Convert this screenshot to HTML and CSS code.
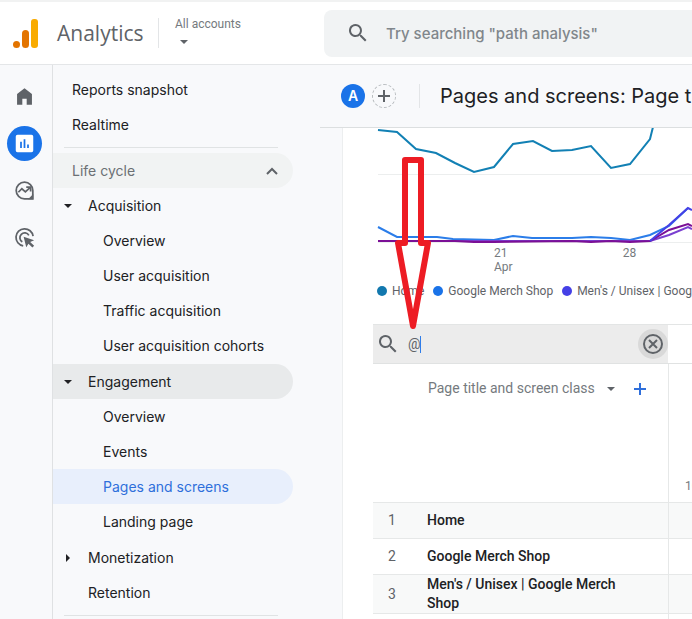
FILE: index.html
```html
<!DOCTYPE html>
<html lang="en">
<head>
  <meta charset="UTF-8">
  <meta name="viewport" content="width=device-width, initial-scale=1">
  <title>Analytics | Pages and screens</title>
  <link rel="stylesheet" href="styles.css">
</head>
<body>
  <header class="topbar">
    <svg class="logo" viewBox="0 0 26 30" aria-hidden="true">
      <circle cx="3.500" cy="26.500" r="3.500" fill="#e37400"/>
      <rect x="9" y="12" width="7" height="18" rx="3.500" fill="#e37400"/>
      <rect x="18" y="1" width="7" height="29" rx="3" fill="#f9ab00"/>
    </svg>
    <span class="brand">Analytics</span>
    <button class="accounts" type="button">
      <span>All accounts</span>
      <span class="arrow-down"></span>
    </button>
    <label class="search">
      <svg class="icon" viewBox="0 0 24 24" aria-hidden="true"><path d="M15.5 14h-.8l-.3-.3A6.5 6.5 0 1 0 13.7 14.4l.3.3v.8l5 5 1.5-1.5-5-5zm-6 0a4.5 4.5 0 1 1 0-9 4.5 4.5 0 0 1 0 9z"/></svg>
      <input type="search" aria-label="Search" placeholder="Try searching &quot;path analysis&quot;">
    </label>
  </header>

  <div class="layout">
    <nav class="rail" aria-label="Main">
      <a href="#" aria-label="Home">
        <svg class="icon" viewBox="0 0 24 24"><path d="M12 2.500 3.500 9v12.500h6v-7h5v7h6V9z"/></svg>
      </a>
      <a href="#" class="active" aria-label="Reports">
        <svg class="icon" viewBox="0 0 24 24"><path d="M4 2h16a2 2 0 0 1 2 2v16a2 2 0 0 1-2 2H4a2 2 0 0 1-2-2V4a2 2 0 0 1 2-2zm3 8v7h2v-7zm4-3v10h2V7zm4 6v4h2v-4z" fill-rule="evenodd"/></svg>
      </a>
      <a href="#" aria-label="Explore">
        <svg class="icon line" viewBox="0 0 24 24"><path d="M21.500 12A9.500 9.500 0 1 0 12 21.500h9.500z"/><path d="m5 14 4-4 4 3.500L18 9"/><path d="M14 8h5v5"/><path class="solid" d="M22 16v6h-6z"/></svg>
      </a>
      <a href="#" aria-label="Advertising">
        <svg class="icon line" viewBox="0 0 24 24"><path d="M10.500 21.500A9.800 9.800 0 1 1 21.800 10.500"/><path d="M9.500 17A5.500 5.500 0 1 1 17 9.500"/><path class="solid" d="m11 11 12 4-4.500 2 4.500 4.500-2 2-4.500-4.500L14 23z"/></svg>
      </a>
    </nav>

    <nav class="menu" aria-label="Reports">
      <a href="#">Reports snapshot</a>
      <a href="#">Realtime</a>
      <hr>
      <button class="section" type="button">
        Life cycle
        <svg viewBox="0 0 12 8" aria-hidden="true"><path d="m1 7 5-5 5 5"/></svg>
      </button>
      <div class="group">
        <a href="#" class="parent"><span class="arrow-down"></span>Acquisition</a>
        <a href="#" class="child">Overview</a>
        <a href="#" class="child">User acquisition</a>
        <a href="#" class="child">Traffic acquisition</a>
        <a href="#" class="child">User acquisition cohorts</a>
      </div>
      <div class="group">
        <a href="#" class="parent open"><span class="arrow-down"></span>Engagement</a>
        <a href="#" class="child">Overview</a>
        <a href="#" class="child">Events</a>
        <a href="#" class="child current">Pages and screens</a>
        <a href="#" class="child">Landing page</a>
      </div>
      <a href="#" class="parent"><span class="arrow-right"></span>Monetization</a>
      <a href="#" class="parent">Retention</a>
      <hr>
    </nav>

    <main class="main">
      <div class="page-head">
        <span class="avatar">A</span>
        <button class="add" type="button" aria-label="Add comparison">
          <svg viewBox="0 0 12 12"><path d="M6 0v12M0 6h12"/></svg>
        </button>
        <h1>Pages and screens: Page title and screen class</h1>
      </div>

      <section class="card">
        <div class="chart">
          <svg viewBox="0 0 319 116" preserveAspectRatio="xMinYMin slice" aria-hidden="true">
            <path class="grid" d="M5 46.500H319M5 114.500H319"/>
            <polyline class="s-home" points="5,2 24,4 43,21 63,25 82,35 101,44 121,39 140,16 160,13 179,23 199,22 218,18 238,40 257,36 277,11 280,-1"/>
            <polyline class="s-shop" points="5,99 24,109 64,109 80,111 121,112 140,108 159,110 199,110 218,109 238,110 257,112 277,107 296,98 315,80"/>
            <polyline class="s-violet" points="5,113 277,113 296,107 315,99 319,101"/>
            <polyline class="s-purple" points="5,113 82,113 101,114 121,114 199,113 218,114 238,113 257,114 277,113 296,102 315,96 319,98"/>
            <polyline class="s-mens" points="277,113 296,97 315,80 319,82"/>
          </svg>
          <div class="axis">
            <span>21<br>Apr</span>
            <span>28</span>
          </div>
          <ul class="legend">
            <li class="home">Home</li>
            <li class="shop">Google Merch Shop</li>
            <li class="mens">Men's / Unisex | Google Merch Shop</li>
          </ul>
        </div>

        <div class="filter-row">
          <div class="filter">
            <svg class="icon" viewBox="0 0 24 24" aria-hidden="true"><path d="M15.5 14h-.8l-.3-.3A6.5 6.5 0 1 0 13.7 14.4l.3.3v.8l5 5 1.5-1.5-5-5zm-6 0a4.5 4.5 0 1 1 0-9 4.5 4.5 0 0 1 0 9z"/></svg>
            <div class="field">
              <input type="text" aria-label="Search rows" value="@">
              <span class="caret"></span>
            </div>
            <button class="clear" type="button" aria-label="Clear">
              <svg viewBox="0 0 20 20"><circle cx="10" cy="10" r="9"/><path d="m6 6 8 8M14 6l-8 8"/></svg>
            </button>
          </div>
        </div>

        <table>
          <colgroup>
            <col class="col-num">
            <col class="col-name">
            <col>
          </colgroup>
          <thead>
            <tr>
              <th class="dimension" colspan="2">
                <div class="picker">
                  <select aria-label="Dimension">
                    <option>Page title and screen class</option>
                  </select>
                  <span class="arrow-down"></span>
                  <button class="plus" type="button" aria-label="Add dimension">
                    <svg viewBox="0 0 12 12"><path d="M6 0v12M0 6h12"/></svg>
                  </button>
                </div>
              </th>
              <th class="metric">100%</th>
            </tr>
          </thead>
          <tbody>
            <tr><td class="num">1</td><td class="name">Home</td><td></td></tr>
            <tr><td class="num">2</td><td class="name">Google Merch Shop</td><td></td></tr>
            <tr><td class="num">3</td><td class="name">Men's / Unisex | Google Merch Shop</td><td></td></tr>
            <tr><td class="num"></td><td class="name"></td><td></td></tr>
          </tbody>
        </table>

        <svg class="pointer" viewBox="0 0 38 176" aria-hidden="true"><path d="M11 6h16v83h7L19 172 4 89h7z"/></svg>
      </section>
    </main>
  </div>
</body>
</html>
```
FILE: styles.css
```css
* {
  box-sizing: border-box;
}

body {
  margin: 0;
  height: 100vh;
  display: flex;
  flex-direction: column;
  overflow: hidden;
  font-family: Inter, "Liberation Sans", sans-serif;
  font-size: 14px;
  color: #202124;
  background: #f8f9fb;
}

button,
input,
select {
  font: inherit;
  color: inherit;
  border: none;
  background: none;
  padding: 0;
  margin: 0;
  outline: none;
}

a {
  color: inherit;
  text-decoration: none;
}

.icon {
  width: 24px;
  height: 24px;
  fill: #5f6368;
  flex: none;
}

.arrow-down {
  border: 4px solid transparent;
  border-top-color: currentColor;
  border-bottom: none;
}

.arrow-right {
  border: 4px solid transparent;
  border-left-color: currentColor;
  border-right: none;
}

/* top bar */
.topbar {
  flex: none;
  height: 65px;
  display: flex;
  align-items: center;
  padding-left: 13px;
  background: #fff;
  border-top: 2px solid #f1f2f2;
  border-bottom: 1px solid #e4e6e8;
}

.logo {
  width: 26px;
  height: 30px;
}

.brand {
  margin-left: 18px;
  width: 102px;
  font-family: "Open Sans", sans-serif;
  font-size: 21px;
  line-height: 30px;
  color: #5f6368;
  border-right: 1px solid #e3e5e7;
}

.accounts {
  width: 165px;
  height: 30px;
  padding-left: 16px;
  display: flex;
  flex-direction: column;
  align-items: flex-start;
  justify-content: space-between;
  font-family: Roboto, sans-serif;
  font-size: 12px;
  line-height: 12px;
  color: #757a7e;
  text-align: left;
}

.accounts .arrow-down {
  margin: 0 5px 4px;
  color: #5f6368;
}

.search {
  flex: 1;
  min-width: 0;
  height: 47px;
  display: flex;
  align-items: center;
  gap: 16px;
  padding-left: 22px;
  background: #f1f3f4;
  border-radius: 8px 0 0 8px;
}

.search input {
  flex: 1;
  min-width: 0;
  font-size: 15px;
  font-weight: 500;
}

.search input::placeholder {
  color: #80868b;
  opacity: 1;
}

/* layout */
.layout {
  flex: 1;
  min-height: 0;
  display: flex;
}

.rail {
  flex: none;
  width: 53px;
  padding: 14px 0 0 7px;
  display: flex;
  flex-direction: column;
  gap: 12px;
  border-right: 1px solid #dfe1e3;
}

.rail a {
  width: 35px;
  height: 35px;
  display: flex;
  align-items: center;
  justify-content: center;
  border-radius: 50%;
}

.rail .icon {
  width: 21px;
  height: 21px;
}

.rail .active {
  background: #1a73e8;
}

.rail .active .icon {
  fill: #fff;
}

.rail .line {
  fill: none;
  stroke: #5f6368;
  stroke-width: 2;
}

.rail .solid {
  fill: #5f6368;
  stroke: none;
}

/* report menu */
.menu {
  flex: none;
  width: 267px;
  padding-top: 7px;
}

.menu a,
.section {
  width: 240px;
  height: 35px;
  display: flex;
  align-items: center;
  padding-left: 19px;
  border-radius: 0 18px 18px 0;
}

.menu hr {
  width: 214px;
  margin: 5px 0 5px 11px;
  border: none;
  border-top: 1px solid #e0e3e4;
}

.menu .section {
  justify-content: space-between;
  padding-right: 15px;
  color: #6b7074;
  background: #f1f3f3;
}

.section svg {
  width: 12px;
  height: 8px;
  fill: none;
  stroke: #5f6368;
  stroke-width: 2;
}

.group {
  margin-bottom: 1px;
}

.menu .parent {
  padding-left: 35px;
}

.parent .arrow-down {
  margin: 0 16px 0 -24px;
}

.parent .arrow-right {
  margin: 0 18px 0 -22px;
}

.menu .child {
  padding-left: 50px;
}

.menu .open {
  background: #e8eaeb;
}

.menu .current {
  color: #2f6fdb;
  background: #e8effc;
}

/* page */
.main {
  flex: 1;
  min-width: 0;
  display: flex;
  flex-direction: column;
}

.page-head {
  flex: none;
  height: 63px;
  display: flex;
  align-items: center;
  padding-left: 21px;
  border-bottom: 1px solid #dcdfe0;
  overflow: hidden;
}

.avatar {
  flex: none;
  width: 24px;
  border-radius: 50%;
  background: #1a73e8;
  color: #fff;
  font-weight: 600;
  line-height: 24px;
  text-align: center;
}

.add {
  flex: none;
  width: 24px;
  height: 24px;
  margin: 0 23px 0 7px;
  display: flex;
  align-items: center;
  justify-content: center;
  border: 1px dashed #b9bdc0;
  border-radius: 50%;
}

.add svg,
.plus svg {
  width: 12px;
  height: 12px;
  stroke: #5f6368;
  stroke-width: 2;
}

.page-head h1 {
  margin: 0;
  padding-left: 20px;
  border-left: 1px solid #e3e5e7;
  font-size: 20px;
  font-weight: 400;
  line-height: 24px;
  white-space: nowrap;
}

.card {
  flex: 1;
  min-height: 0;
  position: relative;
  margin-left: 22px;
  padding-left: 30px;
  background: #fff;
  border-left: 1px solid #eceeef;
  overflow: hidden;
  font-family: Roboto, sans-serif;
}

.chart {
  height: 196px;
  overflow: hidden;
  color: #5f6368;
  font-size: 12px;
  line-height: 14px;
}

.chart svg {
  display: block;
  width: 100%;
  height: 116px;
}

.chart polyline {
  fill: none;
  stroke-width: 2;
}

.grid {
  stroke: #eceeee;
}

.s-home { stroke: #1280b4; }
.s-shop { stroke: #2b7de9; }
.s-mens { stroke: #4540e6; }
.s-violet { stroke: #7a3fd0; }
.s-purple { stroke: #7b1096; }

.axis {
  display: flex;
  gap: 110px;
  padding: 2px 0 0 121px;
  color: #757a7e;
}

.legend {
  margin: 10px 0 0;
  padding: 0 0 0 4px;
  display: flex;
  gap: 9px;
  list-style: none;
  white-space: nowrap;
}

.legend li {
  display: flex;
  align-items: center;
  gap: 5px;
}

.legend li::before {
  content: "";
  width: 10px;
  height: 10px;
  border-radius: 50%;
  background: #1278ae;
}

.legend .shop::before { background: #1a73e8; }
.legend .mens::before { background: #4540e6; }

/* row filter */
.filter-row {
  border-top: 1px solid #e3e5e5;
  border-bottom: 1px solid #e0e2e2;
}

.filter {
  width: 295px;
  height: 38px;
  display: flex;
  align-items: center;
  padding-left: 3px;
  background: #ececec;
}

.field {
  position: relative;
  flex: 1;
  min-width: 0;
  margin-left: 8px;
}

.field input {
  width: 100%;
  color: #5f6368;
}

.caret {
  position: absolute;
  left: 12px;
  top: 0;
  width: 1px;
  height: 17px;
  background: #2f7de9;
}

.clear {
  width: 30px;
  height: 30px;
  display: flex;
  align-items: center;
  justify-content: center;
  border-radius: 50%;
  background: #d9d9d9;
}

.clear svg {
  width: 20px;
  height: 20px;
  fill: none;
  stroke: #5f6368;
  stroke-width: 2;
}

/* table */
table {
  width: 100%;
  table-layout: fixed;
  border-collapse: separate;
  border-spacing: 0;
  line-height: 19px;
}

.col-num {
  width: 54px;
}

.col-name {
  width: 242px;
}

th,
td {
  padding: 0;
  border-bottom: 1px solid #e6e8e8;
  text-align: left;
}

thead th {
  height: 139px;
  font-weight: 400;
  color: #757a7e;
}

.dimension {
  vertical-align: top;
}

.dimension,
.name {
  border-right: 1px solid #e6e8e8;
}

thead .metric {
  padding: 0 0 8px 16px;
  vertical-align: bottom;
  font-size: 12px;
  line-height: 16px;
}

.picker {
  display: flex;
  align-items: center;
  padding: 15px 0 0 55px;
}

.picker select {
  appearance: none;
  height: 19px;
}

.picker .arrow-down {
  margin: 0 19px 0 12px;
  color: #5f6368;
}

.plus {
  display: flex;
}

.plus svg {
  stroke: #2f6fdb;
}

td {
  height: 36px;
}

tbody tr:nth-child(odd) {
  background: #f8f9f9;
}

.num {
  padding-left: 15px;
  color: #5f6368;
}

.name {
  padding-right: 40px;
  font-weight: 500;
}

/* red pointer lies over the chart and the legend */
.pointer {
  position: absolute;
  left: 51px;
  top: 26px;
  width: 38px;
  height: 176px;
  fill: none;
  stroke: #ed1c24;
  stroke-width: 6;
  stroke-linejoin: round;
}
```
